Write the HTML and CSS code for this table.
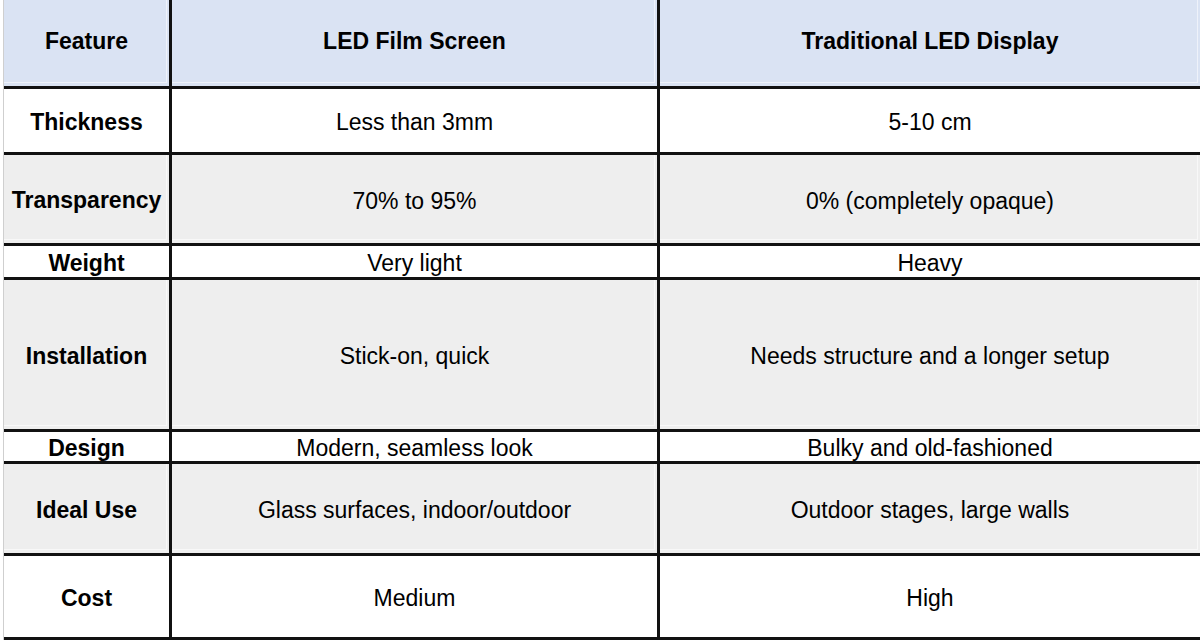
FILE: index.html
```html
<!DOCTYPE html>
<html lang="en">
<head>
<meta charset="utf-8">
<title>LED Film Screen vs Traditional LED Display</title>
<link rel="stylesheet" href="styles.css">
</head>
<body>
<div class="wrap">
  <div class="grid">
    <div class="cell head">Feature</div>
    <div class="cell head">LED Film Screen</div>
    <div class="cell head">Traditional LED Display</div>

    <div class="cell key white">Thickness</div>
    <div class="cell white">Less than 3mm</div>
    <div class="cell white">5-10 cm</div>

    <div class="cell key gray">Transparency</div>
    <div class="cell gray">70% to 95%</div>
    <div class="cell gray">0% (completely opaque)</div>

    <div class="cell key white">Weight</div>
    <div class="cell white">Very light</div>
    <div class="cell white">Heavy</div>

    <div class="cell key gray">Installation</div>
    <div class="cell gray">Stick-on, quick</div>
    <div class="cell gray">Needs structure and a longer setup</div>

    <div class="cell key white">Design</div>
    <div class="cell white">Modern, seamless look</div>
    <div class="cell white">Bulky and old-fashioned</div>

    <div class="cell key gray">Ideal Use</div>
    <div class="cell gray">Glass surfaces, indoor/outdoor</div>
    <div class="cell gray">Outdoor stages, large walls</div>

    <div class="cell key white">Cost</div>
    <div class="cell white">Medium</div>
    <div class="cell white">High</div>
  </div>
</div>
</body>
</html>
```
FILE: styles.css
```css
html, body {
  margin: 0;
  padding: 0;
  background: #ffffff;
}

body {
  font-family: "Liberation Sans", Arial, sans-serif;
  color: #000;
  overflow: hidden;
}

.wrap {
  margin-left: 3px;
  border-left: 1px solid #cfcfcf;
  width: 1200px;
}

.grid {
  display: grid;
  grid-template-columns: 165px 485px 540px;
  grid-template-rows: 86px 63px 88px 31px 149px 29px 89px 81px;
  gap: 3px;
  padding-bottom: 3px;
  background: #111;
}

.cell {
  display: flex;
  align-items: center;
  justify-content: center;
  text-align: center;
  font-size: 23px;
  line-height: 1;
  padding-top: 4px;
  white-space: nowrap;
  overflow: visible;
}

.head {
  background: #dae3f3;
  font-weight: bold;
  padding-top: 0;
  padding-bottom: 4px;
  box-shadow: inset -2px -3px 0 #dae3f3, inset -3px -4px 0 #eef2fa;
}

.key {
  font-weight: bold;
  padding-top: 3px;
}

.white {
  background: #ffffff;
}

.gray {
  background: #eeeeee;
  box-shadow: inset -2px -3px 0 #eeeeee, inset -3px -4px 0 #f8f8f8;
}
```
